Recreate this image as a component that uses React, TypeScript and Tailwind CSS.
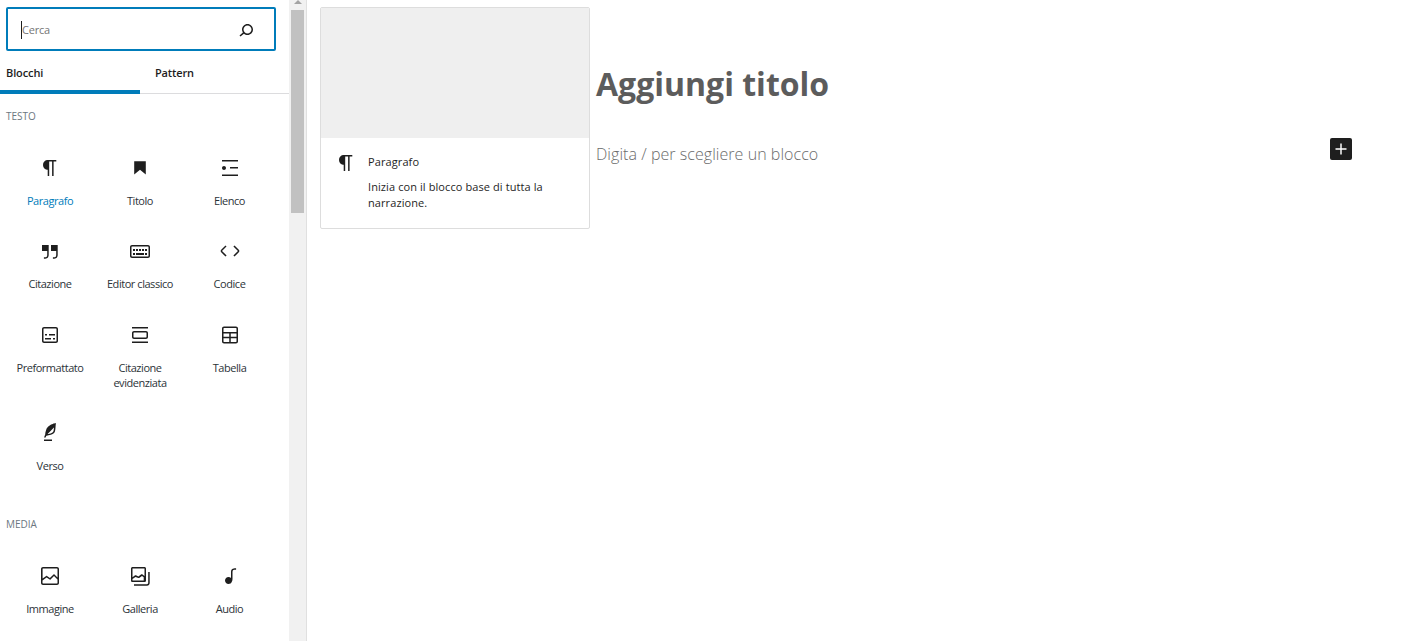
const ICONS: Record<string, string> = {
  paragraph: 'M18.3 4H9.9v-.1l-.9.2c-2.3.4-4 2.4-4 4.8s1.7 4.4 4 4.8l.7.1V20h1.5V5.5h2.9V20h1.5V5.5h2.7V4z',
  heading: 'M6.2 5.2v13.4l5.8-4.8 5.8 4.8V5.2z',
  list: 'M4 4v1.5h16V4H4zm8 8.5h8V11h-8v1.5zM4 20h16v-1.5H4V20zm4-8c0-1.1-.9-2-2-2s-2 .9-2 2 .9 2 2 2 2-.9 2-2z',
  quote:
    'M13 6v6h5.2v4c0 .8-.2 1.4-.5 1.7-.6.6-1.6.6-2.5.5h-.3v1.5h.5c1 0 2.3-.1 3.3-1 .6-.6 1-1.6 1-2.8V6H13zm-9 6h5.2v4c0 .8-.2 1.4-.5 1.7-.6.6-1.6.6-2.5.5h-.3v1.5h.5c1 0 2.3-.1 3.3-1 .6-.6 1-1.6 1-2.8V6H4v6z',
  classic:
    'M20 6H4c-1.1 0-2 .9-2 2v9c0 1.1.9 2 2 2h16c1.1 0 2-.9 2-2V8c0-1.1-.9-2-2-2zm.5 11c0 .3-.2.5-.5.5H4c-.3 0-.5-.2-.5-.5V8c0-.3.2-.5.5-.5h16c.3 0 .5.2.5.5v9zM10 10H8v2h2v-2zm-5 2h2v-2H5v2zm8-2h-2v2h2v-2zm-5 6h8v-2H8v2zm6-4h2v-2h-2v2zm3 0h2v-2h-2v2zm0 4h2v-2h-2v2zM5 16h2v-2H5v2z',
  code: 'M20.8 10.7l-4.3-4.3-1.1 1.1 4.3 4.3c.1.1.1.3 0 .4l-4.3 4.3 1.1 1.1 4.3-4.3c.7-.8.7-1.9 0-2.6zM4.2 11.8l4.3-4.3-1-1-4.3 4.3c-.7.7-.7 1.8 0 2.5l4.3 4.3 1.1-1.1-4.3-4.3c-.2-.1-.2-.3-.1-.4z',
  preformatted:
    'M18 4H6c-1.1 0-2 .9-2 2v12c0 1.1.9 2 2 2h12c1.1 0 2-.9 2-2V6c0-1.1-.9-2-2-2zm.5 14c0 .3-.2.5-.5.5H6c-.3 0-.5-.2-.5-.5V6c0-.3.2-.5.5-.5h12c.3 0 .5.2.5.5v12zM7 16.5h6V15H7v1.5zm4-4h6V11h-6v1.5zM9 11H7v1.5h2V11zm6 5.5h2V15h-2v1.5z',
  pullquote:
    'M18 8H6c-1.1 0-2 .9-2 2v4c0 1.1.9 2 2 2h12c1.1 0 2-.9 2-2v-4c0-1.1-.9-2-2-2zm.5 6c0 .3-.2.5-.5.5H6c-.3 0-.5-.2-.5-.5v-4c0-.3.2-.5.5-.5h12c.3 0 .5.2.5.5v4zM4 4v1.5h16V4H4zm0 16h16v-1.5H4V20z',
  table:
    'M18 3.500H6c-1.100 0-2 .9-2 2v13c0 1.100.9 2 2 2h12c1.100 0 2-.9 2-2v-13c0-1.100-.9-2-2-2zM5.500 5.500c0-.3.2-.5.5-.5h12c.3 0 .5.2.5.5V9h-13V5.500zm0 5h5.750v3.250H5.500V10.500zm7.250 0h5.750v3.250h-5.750V10.500zM5.500 15.250h5.750V19H6c-.3 0-.5-.2-.5-.5v-3.250zm7.250 3.750v-3.750h5.750v3.250c0 .3-.2.5-.5.5h-5.250z',
  verse:
    'M17.8 2l-.9.3c-.1 0-3.6 1-5.2 2.1C10 5.500 9.300 6.500 8.900 7.100c-.6.9-1.700 4.700-1.700 6.300l-.9 2.300c-.2.4 0 .8.4 1 .1 0 .2.1.3.1.3 0 .6-.2.7-.5l.6-1.500c.3 0 .7-.1 1.200-.2.7-.1 1.400-.3 2.200-.5.8-.2 1.600-.5 2.400-.8.7-.3 1.400-.7 1.900-1.200s.8-1.200 1-1.900c.2-.7.3-1.600.4-2.400.1-.8.1-1.700.2-2.500 0-.8.1-1.500.2-2.100V2zm-1.900 5.600c-.1.8-.2 1.500-.3 2.100-.2.6-.4 1-.6 1.300-.3.3-.8.6-1.400.9-.7.3-1.400.5-2.200.8-.6.2-1.300.3-1.800.4L15 7.500c.3-.3.6-.7 1-1.100 0 .4 0 .8-.1 1.200zM6 20h8v-1.500H6V20z',
  image:
    'M19 3H5c-1.100 0-2 .9-2 2v14c0 1.100.9 2 2 2h14c1.100 0 2-.9 2-2V5c0-1.100-.9-2-2-2zM5 4.500h14c.3 0 .5.2.5.5v8.400l-3-2.900c-.3-.3-.8-.3-1 0L11.900 14 9 12c-.3-.2-.6-.2-.8 0l-3.600 2.600V5c-.1-.3.1-.5.4-.5zm14 15H5c-.3 0-.5-.2-.5-.5v-2.400l4.100-3 3 1.900c.3.2.7.2.9-.1L16 12l3.500 3.400V19c0 .3-.2.5-.5.5z',
  gallery:
    'M20.200 8v11c0 .7-.6 1.200-1.200 1.200H6v1.500h13c1.500 0 2.700-1.200 2.700-2.800V8h-1.500zM18 16.400V4.600c0-.9-.7-1.600-1.600-1.600H4.600C3.700 3 3 3.700 3 4.600v11.800c0 .9.7 1.600 1.600 1.600h11.800c.9 0 1.600-.7 1.600-1.600zM4.500 4.600c0-.1.1-.1.1-.1h11.800c.1 0 .1.1.1.1V12l-2.300-1.700c-.3-.2-.6-.2-.9 0l-2.900 2.100L8 11.300c-.3-.2-.6-.2-.9 0l-2.600 1.900V4.600zm11.900 11.900H4.600c-.1 0-.1-.1-.1-.1V15l3-2.100 2.800 1.100c.3.1.6.1.9-.1l2.800-2 1.700 1.300v3.200c.1 0 0 .1-.1.1z',
  audio:
    'M17.700 4.300c-1.200 0-2.800 0-3.800 1-.6.6-.9 1.500-.9 2.600V14c-.6-.6-1.500-1-2.500-1C8.600 13 7 14.600 7 16.500S8.600 20 10.500 20c1.500 0 2.800-1 3.300-2.300.5-.8.7-1.800.7-2.700V7.900c0-.7.2-1.200.5-1.600.6-.6 1.800-.6 2.800-.6h.3V4.300h-.4z',
  search:
    'M13.500 6C10.500 6 8 8.500 8 11.500c0 1.100.3 2.100.9 3l-3.400 3 1 1.100 3.400-2.900c1 .9 2.200 1.400 3.600 1.400 3 0 5.500-2.500 5.500-5.500C19 8.500 16.500 6 13.500 6zm0 9.500c-2.200 0-4-1.800-4-4s1.800-4 4-4 4 1.800 4 4-1.800 4-4 4z',
  plus: 'M18 11.200h-5.200V6h-1.600v5.200H6v1.600h5.200V18h1.600v-5.200H18z',
};

function Icon({ name, className = 'h-6 w-6' }: { name: string; className?: string }) {
  return (
    <svg viewBox="0 0 24 24" fill="currentColor" className={className}>
      <path d={ICONS[name]} />
    </svg>
  );
}

type Block = { icon: string; label: string; active?: boolean };

const TEXT_BLOCKS: Block[] = [
  { icon: 'paragraph', label: 'Paragrafo', active: true },
  { icon: 'heading', label: 'Titolo' },
  { icon: 'list', label: 'Elenco' },
  { icon: 'quote', label: 'Citazione' },
  { icon: 'classic', label: 'Editor classico' },
  { icon: 'code', label: 'Codice' },
  { icon: 'preformatted', label: 'Preformattato' },
  { icon: 'pullquote', label: 'Citazione evidenziata' },
  { icon: 'table', label: 'Tabella' },
  { icon: 'verse', label: 'Verso' },
];

const MEDIA_BLOCKS: Block[] = [
  { icon: 'image', label: 'Immagine' },
  { icon: 'gallery', label: 'Galleria' },
  { icon: 'audio', label: 'Audio' },
];

function BlockGrid({ blocks }: { blocks: Block[] }) {
  return (
    <div className="grid grid-cols-[90px_90px_89px] gap-y-[27.3px] pl-[5px]">
      {blocks.map((b) => (
        <div key={b.label} className="flex flex-col items-center px-2 pt-[4px]">
          <span className="text-[#1e1e1e]">
            <Icon name={b.icon} />
          </span>
          <span
            className={`mt-[13px] text-center text-[11px] leading-[15px] tracking-[-0.45px] ${
              b.active ? 'text-[#007cba]' : 'text-[#2c3338]'
            }`}
          >
            {b.label}
          </span>
        </div>
      ))}
    </div>
  );
}

export default function App() {
  return (
    <div className="flex h-[641px] overflow-hidden bg-white font-['Open_Sans','Noto_Sans',sans-serif] text-[#1e1e1e]">
      <aside className="flex w-[307px] shrink-0 border-r border-[#e0e0e0]">
        <div className="h-full w-[289px] shrink-0 overflow-hidden">
          <div className="px-[6px] pt-[7px]">
            <div className="flex h-[44px] w-[270px] items-center justify-between rounded-[2px] border-2 border-[#007cba] pl-[13px] pr-[16px]">
              <span className="mt-[2px] border-l border-[#1e1e1e] text-[11px] leading-[18px] tracking-[-0.2px] text-[#757575]">
                Cerca
              </span>
              <span className="mt-[2px]">
                <Icon name="search" />
              </span>
            </div>
          </div>
          <div className="flex h-[43px] border-b border-[#dcdcde]">
            <div className="flex h-[43px] w-[140px] items-center border-b-4 border-[#007cba] pl-[6px] pt-[5px] text-[11px] font-semibold tracking-[-0.1px]">
              Blocchi
            </div>
            <div className="flex h-[42px] items-center pl-[15px] pt-[2px] text-[11px] font-semibold tracking-[-0.15px]">
              Pattern
            </div>
          </div>
          <h2 className="mt-[16px] pl-[6px] text-[10px] leading-[12px] text-[#6c7781]">TESTO</h2>
          <div className="mt-[30px]">
            <BlockGrid blocks={TEXT_BLOCKS} />
          </div>
          <h2 className="mt-[45px] pl-[6px] text-[10px] leading-[12px] text-[#6c7781]">MEDIA</h2>
          <div className="mt-[30px]">
            <BlockGrid blocks={MEDIA_BLOCKS} />
          </div>
        </div>
        <div className="flex h-full w-[17px] flex-col items-center bg-[#f1f1f1]">
          <div className="h-0 w-0 border-x-[4px] border-b-[4px] border-x-transparent border-b-[#a3a3a3]" />
          <div className="mt-[6px] h-[203px] w-[13px] bg-[#c1c1c1]" />
        </div>
      </aside>

      <div className="ml-[13px] mt-[7px] flex h-[222px] w-[270px] shrink-0 flex-col overflow-hidden rounded-[2px] border border-[#dddddd]">
        <div className="h-[130px] shrink-0 bg-[#efefef]" />
        <div className="flex gap-[10px] px-[13px] pt-[13px]">
          <Icon name="paragraph" className="h-6 w-[24px] shrink-0" />
          <div className="min-w-0 pt-[3px]">
            <div className="text-[11px] leading-[16px] font-medium tracking-[0.1px]">Paragrafo</div>
            <p className="mt-[9px] text-[11px] leading-[16px] tracking-[0.09px]">
              Inizia con il blocco base di tutta la narrazione.
            </p>
          </div>
        </div>
      </div>

      <main className="min-w-0 flex-1 pl-[6px] pr-[56px] pt-[63px]">
        <h1 className="text-[32px] leading-[42px] font-bold text-[#5c5c5c]">Aggiungi titolo</h1>
        <div className="mt-[33px] flex items-start justify-between">
          <p className="mt-[5px] text-[16px] leading-[22px] font-light tracking-[0.05px] text-[#6b6b6b]">
            Digita / per scegliere un blocco
          </p>
          <span className="flex h-[22px] w-[22px] items-center justify-center rounded-[2px] bg-[#1e1e1e] text-white">
            <Icon name="plus" className="h-[22px] w-[22px]" />
          </span>
        </div>
      </main>
    </div>
  );
}
